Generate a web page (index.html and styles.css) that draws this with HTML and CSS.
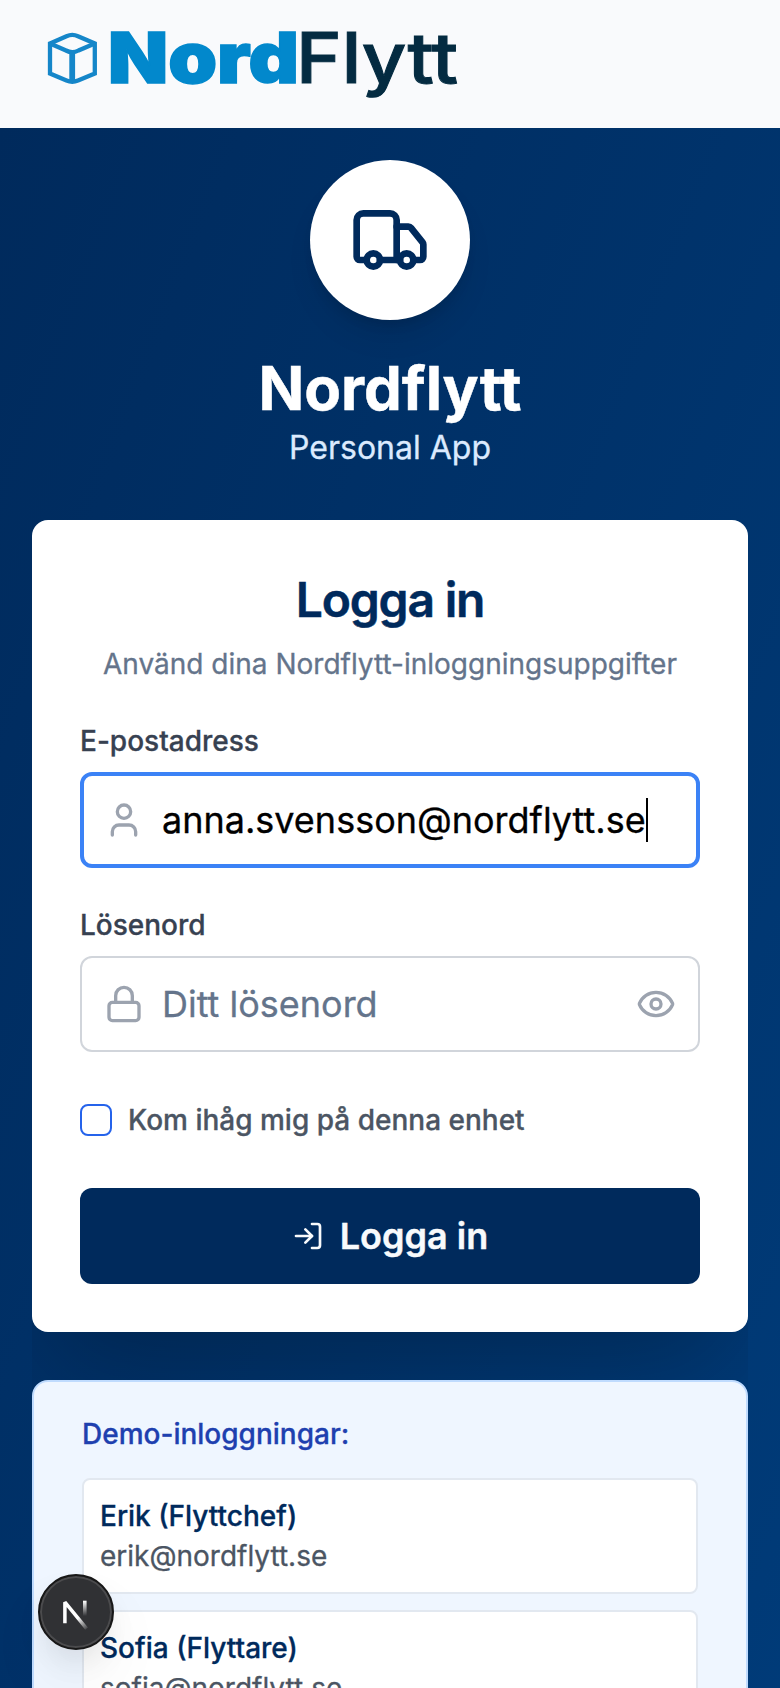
FILE: index.html
```html
<!DOCTYPE html>
<html lang="sv">
<head>
<meta charset="utf-8">
<title>Nordflytt</title>
<link rel="stylesheet" href="styles.css">
</head>
<body>
<header class="topbar">
  <svg class="logo" width="500" height="128" viewBox="0 0 500 128" role="img" aria-label="NordFlytt">
    <g fill="none" stroke="#1586c9" stroke-width="4.3">
      <path d="M50 43.500 66.500 36.200Q72.300 33.500 78 36.200L94.800 43.500V73.500L78 80.500Q72.300 83 66.500 80.500L50 73.500Z"/>
      <path d="M50 43.500 66 50.500Q72.300 54 78.500 50.500L94.800 43.500"/>
      <path d="M72.200 52V82" stroke-width="5.800"/>
    </g>
    <text class="logo-nord" x="108" y="82.500" textLength="191" lengthAdjust="spacingAndGlyphs">Nord</text>
    <text class="logo-flytt" x="296" y="83" textLength="162" lengthAdjust="spacingAndGlyphs">Flytt</text>
  </svg>
</header>
<main class="page">
  <section class="brand">
    <div class="brand-badge">
      <svg class="icon truck" viewBox="0 0 24 24"><path d="M14 18V6a2 2 0 0 0-2-2H4a2 2 0 0 0-2 2v11a1 1 0 0 0 1 1h2"/><path d="M15 18H9"/><path d="M19 18h2a1 1 0 0 0 1-1v-3.650a1 1 0 0 0-.22-.624l-3.480-4.350A1 1 0 0 0 17.520 8H14"/><circle cx="17" cy="18" r="2"/><circle cx="7" cy="18" r="2"/></svg>
    </div>
    <h1 class="brand-name">Nordflytt</h1>
    <p class="brand-sub">Personal App</p>
  </section>
  <div class="cards">
    <form class="login">
      <h2 class="login-title">Logga in</h2>
      <p class="login-sub">Använd dina Nordflytt-inloggningsuppgifter</p>
      <div class="label">E-postadress</div>
      <div class="field field-focus">
        <svg class="icon" viewBox="0 0 24 24"><path d="M19 21v-2a4 4 0 0 0-4-4H9a4 4 0 0 0-4 4v2"/><circle cx="12" cy="7" r="4"/></svg>
        <span class="email">anna.svensson@nordflytt.se</span><span class="caret"></span>
      </div>
      <div class="label">Lösenord</div>
      <div class="field">
        <svg class="icon" viewBox="0 0 24 24"><rect x="3" y="11" width="18" height="11" rx="2"/><path d="M7 11V7a5 5 0 0 1 10 0v4"/></svg>
        <span class="placeholder">Ditt lösenord</span>
        <svg class="icon eye" viewBox="0 0 24 24"><path d="M2.062 12.348a1 1 0 0 1 0-.696 10.750 10.750 0 0 1 19.876 0 1 1 0 0 1 0 .696 10.750 10.750 0 0 1-19.876 0"/><circle cx="12" cy="12" r="3"/></svg>
      </div>
      <div class="remember"><span class="checkbox"></span><span class="remember-text">Kom ihåg mig på denna enhet</span></div>
      <button type="button" class="submit">
        <svg class="icon enter" viewBox="0 0 24 24"><path d="M15 3h4a2 2 0 0 1 2 2v14a2 2 0 0 1-2 2h-4"/><path d="m10 17 5-5-5-5"/><path d="M15 12H3"/></svg>
        <span class="submit-text">Logga in</span>
      </button>
    </form>
    <section class="demo">
      <div class="demo-title">Demo-inloggningar:</div>
      <div class="account"><div class="account-name">Erik (Flyttchef)</div><div class="account-mail">erik@nordflytt.se</div></div>
      <div class="account"><div class="account-name">Sofia (Flyttare)</div><div class="account-mail">sofia@nordflytt.se</div></div>
    </section>
  </div>
</main>
<div class="devtools">
  <svg width="72" height="72" viewBox="0 0 72 72" fill="none">
    <defs>
      <linearGradient id="diag" gradientUnits="userSpaceOnUse" x1="38" y1="42" x2="48" y2="54"><stop stop-color="#fff"/><stop offset="1" stop-color="#fff" stop-opacity="0"/></linearGradient>
      <linearGradient id="bar" gradientUnits="userSpaceOnUse" x1="0" y1="25" x2="0" y2="40"><stop stop-color="#fff"/><stop offset="1" stop-color="#fff" stop-opacity="0"/></linearGradient>
    </defs>
    <path d="M24.900 47.300V26.200L46.600 52.600" stroke="url(#diag)" stroke-width="3.500" stroke-linejoin="bevel"/>
    <path d="M44.800 24.700V40" stroke="url(#bar)" stroke-width="3.600"/>
  </svg>
</div>
</body>
</html>
```
FILE: styles.css
```css
* { box-sizing: border-box; }
html { height: 1688px; overflow: hidden; }
body { margin: 0; height: 1688px; overflow: hidden; position: relative; font-family: Inter, "Liberation Sans", sans-serif; }
h1, h2, p { margin: 0; }
.topbar { height: 128px; background: #f9fafc; }
.logo { display: block; }
.logo-nord { font-size: 70px; font-weight: 900; fill: #0288cc; stroke: #0288cc; stroke-width: 1.5px; }
.logo-flytt { font-size: 70px; font-weight: 500; fill: #042b41; stroke: #042b41; stroke-width: 1px; }
.page { min-height: 2040px; padding: 32px 32px 0; background: linear-gradient(to bottom right, #002a5c 0%, #003d7c 100%); }
.brand { display: flex; flex-direction: column; align-items: center; margin-bottom: 48px; }
.brand-badge { display: flex; align-items: center; justify-content: center; width: 160px; height: 160px; margin-bottom: 32px; border-radius: 50%; background: #fff; color: #002a5c; box-shadow: 0 20px 30px -6px rgba(0, 0, 0, .1), 0 8px 12px -4px rgba(0, 0, 0, .1); }
.icon { flex: none; width: 40px; height: 40px; fill: none; stroke: currentColor; stroke-width: 2; stroke-linecap: round; stroke-linejoin: round; }
.truck { width: 80px; height: 80px; }
.brand-name { font-size: 60px; line-height: 72px; font-weight: 700; color: #fff; -webkit-text-stroke: .5px #fff; }
.brand-sub { font-size: 32px; line-height: 48px; color: #dbeafe; -webkit-text-stroke: .3px #dbeafe; }
.cards { overflow: hidden; }
.login { height: 812px; padding: 48px; border-radius: 16px; background: #fff; box-shadow: 0 50px 100px -24px rgba(0, 0, 0, .25); }
.login-title { font-size: 48px; line-height: 64px; font-weight: 600; letter-spacing: -1.2px; text-align: center; color: #002a5c; -webkit-text-stroke: .5px #002a5c; }
.login-sub { margin: 12px 0 37px; font-size: 28px; line-height: 40px; text-align: center; white-space: nowrap; color: #64748b; -webkit-text-stroke: .3px #64748b; }
.label { font-size: 28px; line-height: 40px; margin-bottom: 11px; font-weight: 500; color: #374151; -webkit-text-stroke: .3px #374151; }
.field { display: flex; align-items: center; height: 96px; padding: 0 22px; border: 2px solid #d1d5db; border-radius: 12px; font-size: 36px; color: #9ca3af; }
.field-focus { margin-bottom: 37px; padding: 0 20px; border: 4px solid #3b82f6; border-radius: 12px; }
.email { margin-left: 18px; color: #000; -webkit-text-stroke: .3px #000; }
.caret { width: 2px; height: 44px; background: #000; }
.placeholder { margin-left: 18px; color: #64748b; -webkit-text-stroke: .3px #64748b; }
.eye { margin-left: auto; }
.remember { display: flex; align-items: center; gap: 16px; height: 136px; }
.checkbox { width: 32px; height: 32px; border: 2px solid #2563eb; border-radius: 8px; }
.remember-text { font-size: 28px; font-weight: 500; color: #4b5563; -webkit-text-stroke: .3px #4b5563; }
.submit { display: flex; align-items: center; justify-content: center; gap: 16px; width: 100%; height: 96px; padding: 0; border: 0; border-radius: 12px; background: #002a5c; color: #f8fafc; font: 600 36px/56px Inter, "Liberation Sans", sans-serif; }
.submit-text { -webkit-text-stroke: .4px #f8fafc; }
.enter { width: 32px; height: 32px; }
.demo { height: 440px; margin-top: 48px; padding: 32px 48px; border: 2px solid #bfdbfe; border-radius: 16px; background: #eff6ff; }
.demo-title { margin-bottom: 24px; font-size: 28px; line-height: 40px; font-weight: 500; color: #1e40af; -webkit-text-stroke: .3px #1e40af; }
.account { height: 116px; margin-bottom: 16px; padding: 16px; border: 2px solid #e2e8f0; border-radius: 8px; background: #fff; font-size: 28px; line-height: 40px; }
.account-name { font-weight: 500; color: #002a5c; -webkit-text-stroke: .3px #002a5c; }
.account-mail { color: #4b5563; -webkit-text-stroke: .3px #4b5563; }
.devtools { position: absolute; left: 38px; top: 1574px; width: 76px; height: 76px; border: 2px solid #171717; border-radius: 50%; background: #303134; box-shadow: inset 0 0 0 2px #4b4b4d, 0 16px 32px -8px rgba(0, 0, 0, .1), 0 32px 64px rgba(0, 0, 0, .05); }
.devtools svg { display: block; }
```
